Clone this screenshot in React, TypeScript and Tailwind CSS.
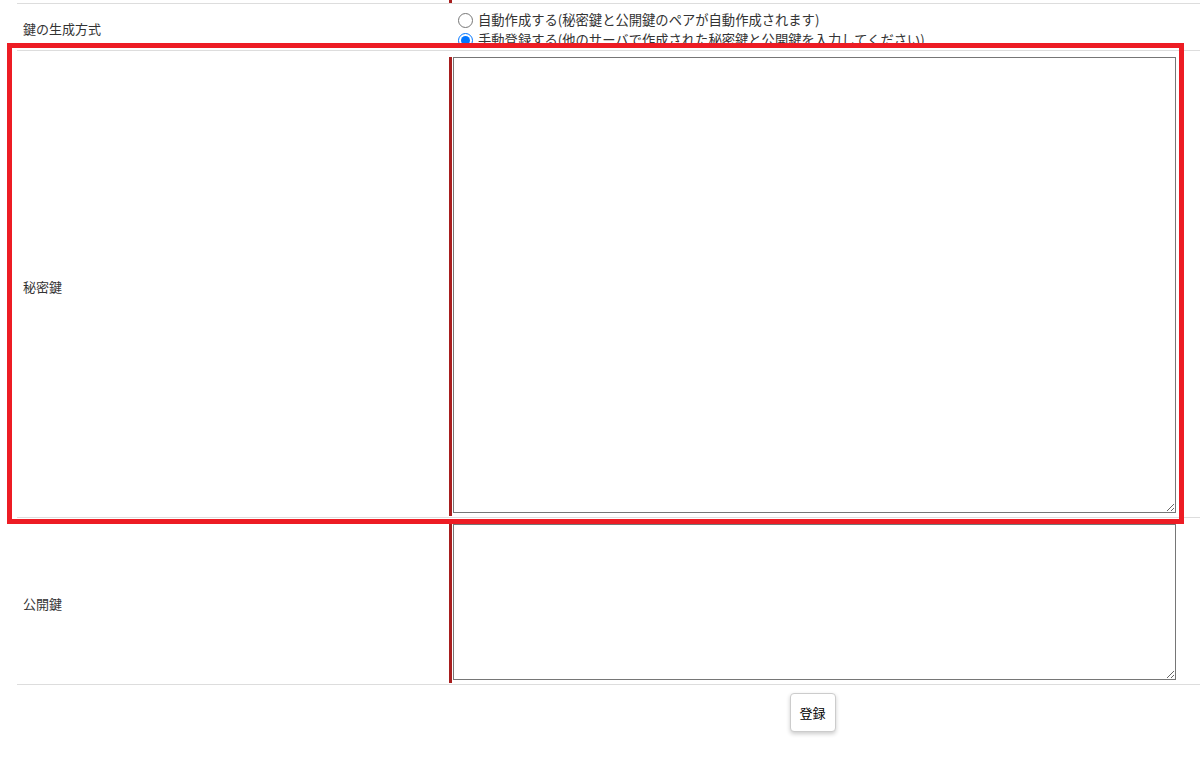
import React from "react";

const font = { fontFamily: '"Noto Sans CJK JP", "Noto Sans", sans-serif' };

function KeyArea({ height }: { height: string }) {
  return (
    <div className="pt-[6px] pb-[1px]">
      <div className="border-l-[3px] border-[#a81e1e] pl-[1px] pb-[3px]">
        <textarea
          className={`block w-[723px] ${height} border border-[#767676] bg-white outline-none`}
        />
      </div>
    </div>
  );
}

export default function App() {
  return (
    <div className="relative w-[1200px] h-[757px] bg-white text-[13px] text-[#333]" style={font}>
      <div className="ml-[17px]">
        {/* tail of the previous row */}
        <div className="flex h-[4px] border-b border-[#dddddd]">
          <div className="w-[432px]" />
          <div className="border-l-[3px] border-[#a81e1e] h-[3px]" />
        </div>

        {/* 鍵の生成方式 */}
        <div className="flex h-[47px] border-b border-[#dddddd]">
          <div className="w-[432px] flex items-center pl-[6px] pt-[4px]">鍵の生成方式</div>
          <div className="pt-[6px] pl-[9px] leading-[20px] text-[13.3px]">
            <label className="flex items-center gap-[5px]">
              <input type="radio" name="gen" className="w-[15px] h-[15px] m-0 accent-[#0075ff]" />
              <span>自動作成する(秘密鍵と公開鍵のペアが自動作成されます)</span>
            </label>
            <label className="flex items-center gap-[5px]">
              <input type="radio" name="gen" defaultChecked className="w-[15px] h-[15px] m-0 accent-[#0075ff]" />
              <span>手動登録する(他のサーバで作成された秘密鍵と公開鍵を入力してください)</span>
            </label>
          </div>
        </div>

        {/* 秘密鍵 */}
        <div className="flex border-b border-[#dddddd]">
          <div className="w-[432px] flex items-center pl-[6px] pt-[5px]">秘密鍵</div>
          <KeyArea height="h-[456px]" />
        </div>

        {/* 公開鍵 */}
        <div className="flex border-b border-[#dddddd]">
          <div className="w-[432px] flex items-center pl-[6px] pt-[5px]">公開鍵</div>
          <KeyArea height="h-[156px]" />
        </div>

        <div className="flex pt-[8px]">
          <div className="w-[432px]" />
          <div className="w-[727px] flex justify-center">
            <button className="w-[46px] h-[39px] bg-white border border-[#cccccc] rounded-[4px] shadow-[0_2px_4px_rgba(0,0,0,0.2)] text-[13px] text-black">
              登録
            </button>
          </div>
        </div>
      </div>

      {/* annotation frame */}
      <div className="absolute left-[7px] top-[43px] w-[1177px] h-[481px] border-[5px] border-[#ed1c24] pointer-events-none" />
    </div>
  );
}
